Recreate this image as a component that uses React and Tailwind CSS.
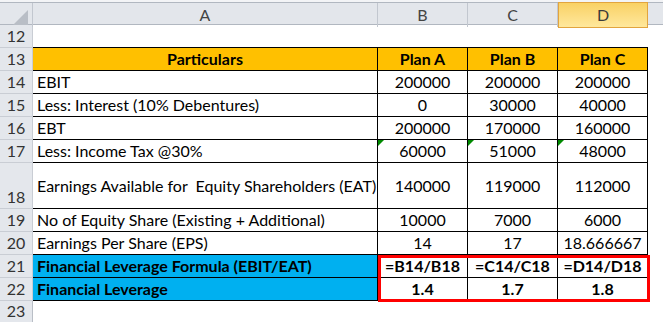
const font = { fontFamily: 'Lato, "Open Sans", sans-serif' };

const rows = [
  { n: 12, h: 'h-[23px]', blank: true, top: true },
  { n: 13, h: 'h-[23px]', a: 'Particulars', vals: ['Plan A', 'Plan B', 'Plan C'], bg: 'bg-[#ffc000]', bold: true, center: true },
  { n: 14, h: 'h-[23px]', a: 'EBIT', vals: ['200000', '200000', '200000'] },
  { n: 15, h: 'h-[23px]', a: 'Less: Interest (10% Debentures)', vals: ['0', '30000', '40000'] },
  { n: 16, h: 'h-[23px]', a: 'EBT', vals: ['200000', '170000', '160000'] },
  { n: 17, h: 'h-[23px]', a: 'Less: Income Tax @30%', vals: ['60000', '51000', '48000'], flag: true },
  { n: 18, h: 'h-[46px]', a: 'Earnings Available for  Equity Shareholders (EAT)', vals: ['140000', '119000', '112000'] },
  { n: 19, h: 'h-[23px]', a: 'No of Equity Share (Existing + Additional)', vals: ['10000', '7000', '6000'] },
  { n: 20, h: 'h-[23px]', a: 'Earnings Per Share (EPS)', vals: ['14', '17', '18.666667'] },
  { n: 21, h: 'h-[23px]', a: 'Financial Leverage Formula (EBIT/EAT)', vals: ['=B14/B18', '=C14/C18', '=D14/D18'], aBg: 'bg-[#00b0f0]', bold: true },
  { n: 22, h: 'h-[23px]', a: 'Financial Leverage', vals: ['1.4', '1.7', '1.8'], aBg: 'bg-[#00b0f0]', bold: true },
  { n: 23, h: 'h-[21px]', blank: true, last: true },
];

function RowHead({ n, h, last }) {
  return (
    <div className={`${h} bg-[#e4e7ec] border-r border-[#b9bec6] ${last ? '' : 'border-b border-[#c9cdd4]'} flex items-end justify-center pb-[1px] text-[16px] leading-none text-[#333] box-border`}>
      <span className="mb-[2px]">{n}</span>
    </div>
  );
}

function ErrorFlag() {
  return (
    <svg className="absolute left-0 top-0" width="6" height="6" viewBox="0 0 6 6">
      <polygon points="0,0 6,0 0,6" fill="#008a00" />
    </svg>
  );
}

export default function App() {
  return (
    <div className="relative w-[663px] h-[322px] overflow-hidden bg-white text-black" style={font}>
      <div className="h-[2px] bg-[#f3f4f6]" />
      {/* column letters */}
      <div className="grid grid-cols-[33px_345px_90px_90px_90px_1fr] h-[23px] border-t border-b border-[#b1b7c0] box-border text-[16px] text-[#444] bg-[#e3e6eb]">
        <div className="relative border-r border-[#c2c7cf]">
          <svg className="absolute right-[4px] bottom-[2px]" width="15" height="15" viewBox="0 0 15 15">
            <polygon points="15,0 15,15 0,15" fill="#b9bec6" />
          </svg>
        </div>
        <div className="border-r border-[#c2c7cf] flex items-center justify-center">A</div>
        <div className="border-r border-[#c2c7cf] flex items-center justify-center">B</div>
        <div className="border-r border-[#c2c7cf] flex items-center justify-center">C</div>
        <div className="-mt-px -mb-px border border-[#e2a43e] bg-gradient-to-b from-[#f9d163] to-[#ffe89c] flex items-center justify-center text-[#3a3a3a]">D</div>
        <div />
      </div>

      {rows.map((r) => (
        <div key={r.n} className="grid grid-cols-[33px_345px_90px_90px_90px_1fr]">
          <RowHead n={r.n} h={r.h} last={r.last} />
          {r.blank ? (
            <>
              <div className={`${r.h} col-span-4 box-border ${r.top ? 'border-b border-black' : ''}`} />
              <div className={r.h} />
            </>
          ) : (
            <>
              <div className={`${r.h} box-border border-r border-b border-black ${r.aBg || r.bg || ''} ${r.bold ? 'font-bold' : ''} ${r.center ? 'justify-center' : 'pl-[4px]'} flex items-center text-[16px] whitespace-pre`}>
                {r.a}
              </div>
              {r.vals.map((v, i) => (
                <div key={i} className={`${r.h} relative box-border border-r border-b border-black ${r.bg || ''} ${r.bold ? 'font-bold' : ''} flex items-center justify-center text-[16px]`}>
                  {r.flag && <ErrorFlag />}
                  {v}
                </div>
              ))}
              <div className={r.h} />
            </>
          )}
        </div>
      ))}

      {/* highlight around the formula results */}
      <div className="absolute left-[378px] top-[255px] w-[272px] h-[47px] border-[3px] border-[#ff0000] pointer-events-none" />
    </div>
  );
}
